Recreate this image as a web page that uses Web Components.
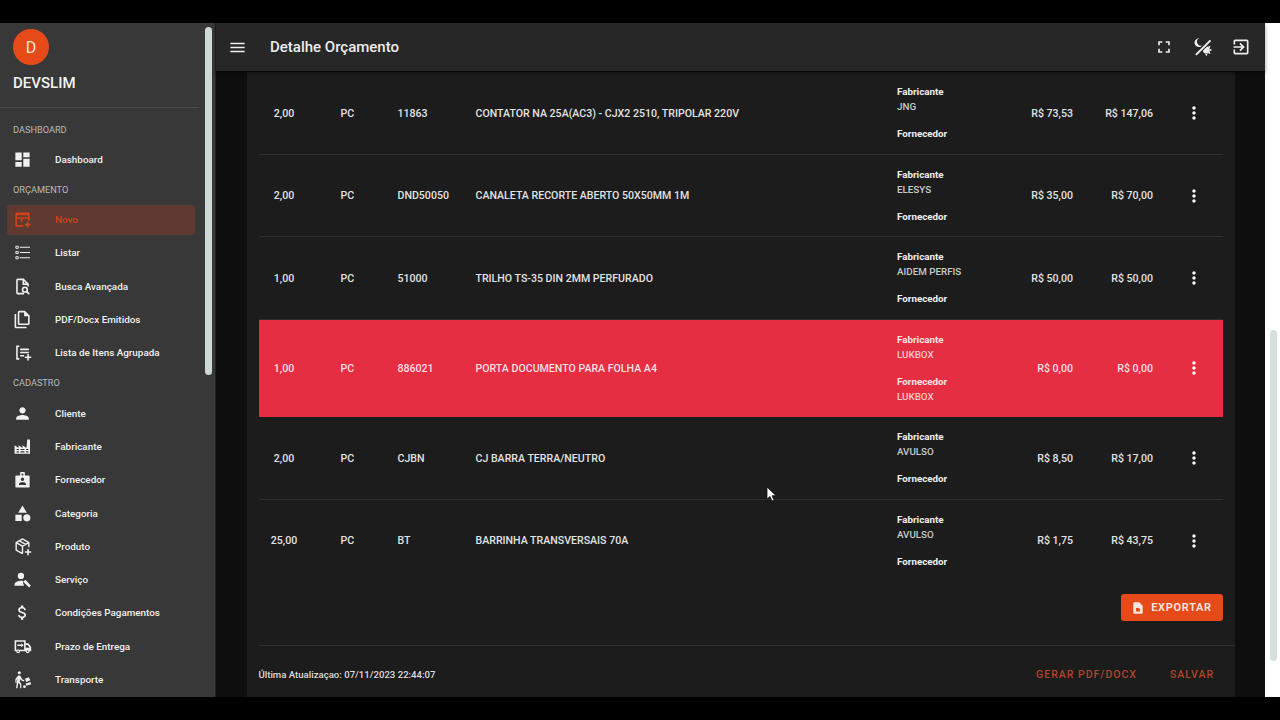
<!DOCTYPE html>
<html lang="pt-BR"><head><meta charset="utf-8"><title>Detalhe Orçamento</title>
<style>
html,body{margin:0;height:100%;background:#000;overflow:hidden;font-family:Roboto,"Liberation Sans",sans-serif}
</style></head><body>
<x-shell>
  <x-sidebar>
    <x-nav-label>DASHBOARD</x-nav-label>
    <x-nav-item icon="dashboard">Dashboard</x-nav-item>
    <x-nav-label>ORÇAMENTO</x-nav-label>
    <x-nav-item icon="calplus" active>Novo</x-nav-item>
    <x-nav-item icon="list">Listar</x-nav-item>
    <x-nav-item icon="find">Busca Avançada</x-nav-item>
    <x-nav-item icon="copy">PDF/Docx Emitidos</x-nav-item>
    <x-nav-item icon="playlist">Lista de Itens Agrupada</x-nav-item>
    <x-nav-label>CADASTRO</x-nav-label>
    <x-nav-item icon="person">Cliente</x-nav-item>
    <x-nav-item icon="factory">Fabricante</x-nav-item>
    <x-nav-item icon="badge">Fornecedor</x-nav-item>
    <x-nav-item icon="category">Categoria</x-nav-item>
    <x-nav-item icon="box">Produto</x-nav-item>
    <x-nav-item icon="service">Serviço</x-nav-item>
    <x-nav-item icon="money">Condições Pagamentos</x-nav-item>
    <x-nav-item icon="truck">Prazo de Entrega</x-nav-item>
    <x-nav-item icon="walker">Transporte</x-nav-item>
  </x-sidebar>
  <x-main>
    <x-card>
      <x-row qty="2,00" code="11863" desc="CONTATOR NA 25A(AC3) - CJX2 2510, TRIPOLAR 220V" fab="JNG" price="R$ 73,53" total="R$ 147,06"></x-row>
      <x-row qty="2,00" code="DND50050" desc="CANALETA RECORTE ABERTO 50X50MM 1M" fab="ELESYS" price="R$ 35,00" total="R$ 70,00"></x-row>
      <x-row qty="1,00" code="51000" desc="TRILHO TS-35 DIN 2MM PERFURADO" fab="AIDEM PERFIS" price="R$ 50,00" total="R$ 50,00"></x-row>
      <x-row alert qty="1,00" code="886021" desc="PORTA DOCUMENTO PARA FOLHA A4" fab="LUKBOX" forn="LUKBOX" price="R$ 0,00" total="R$ 0,00"></x-row>
      <x-row qty="2,00" code="CJBN" desc="CJ BARRA TERRA/NEUTRO" fab="AVULSO" price="R$ 8,50" total="R$ 17,00"></x-row>
      <x-row last qty="25,00" code="BT" desc="BARRINHA TRANSVERSAIS 70A" fab="AVULSO" price="R$ 1,75" total="R$ 43,75"></x-row>
      <x-card-actions></x-card-actions>
    </x-card>
  </x-main>
</x-shell>
<x-cursor></x-cursor>
<script>
const ICONS={
dashboard:'<path d="M3 13h8V3H3v10zm0 8h8v-6H3v6zm10 0h8V11h-8v10zm0-18v6h8V3h-8z"/>',
calplus:'<path fill-rule="evenodd" d="M4 3h16a1 1 0 0 1 1 1v10h-2v-3H5v8h8v2H4a1 1 0 0 1-1-1V4a1 1 0 0 1 1-1zm1 3.500V9h14V6.500z"/><path d="M10 11h2v4h-2zM17.500 15v2.500H15v2h2.500V22h2v-2.500H22v-2h-2.500V15z"/>',
list:'<path d="M8.500 4.700h13v1.400h-13zM8.500 11.300h13v1.400h-13zM8.500 17.900h13v1.400h-13z"/><path fill="none" stroke="currentColor" stroke-width="1.200" d="M3.600 4.100h3v2.600h-3zM3.600 10.700h3v2.600h-3zM3.600 17.300h3v2.600h-3z"/>',
find:'<path fill="none" stroke="currentColor" stroke-width="2" d="M14 3H6a1 1 0 0 0-1 1v16a1 1 0 0 0 1 1h8M13 3l6 6v3M13 3v6h6"/><circle cx="15" cy="16" r="3" fill="none" stroke="currentColor" stroke-width="2"/><path fill="none" stroke="currentColor" stroke-width="2.200" d="M17 18.200l3.500 3.500"/>',
copy:'<path d="M2 5h2v16h13v2H4a2 2 0 0 1-2-2z"/><path d="M15 1H8a2 2 0 0 0-2 2v14a2 2 0 0 0 2 2h11a2 2 0 0 0 2-2V7l-6-6zM8 17V3h6v5h5v9H8z"/>',
playlist:'<path d="M4 3h4v2H6v14h2v2H4zM9 7h11v2H9zM9 11h11v2H9zM9 15h5v2H9zM18 14v3h-3v2h3v3h2v-3h3v-2h-3v-3z"/>',
person:'<path d="M12 12c2.210 0 4-1.790 4-4s-1.790-4-4-4-4 1.790-4 4 1.790 4 4 4zm0 2c-2.670 0-8 1.340-8 4v2h16v-2c0-2.660-5.330-4-8-4z"/>',
factory:'<path fill-rule="evenodd" d="M2 21V10.500l5 3.500v-3.500l5 3.500v-3.500l5 3.500L18 3h3.500v18zM4.500 15v1.500h3V15zm5 0v1.500h5V15zm7 0v1.500h3V15zM4.500 18v1.500h3V18zm5 0v1.500h5V18zm7 0v1.500h3V18z"/>',
badge:'<path fill-rule="evenodd" d="M9 7V3.500a1 1 0 0 1 1-1h4a1 1 0 0 1 1 1V7h5a1 1 0 0 1 1 1v13a1 1 0 0 1-1 1H4a1 1 0 0 1-1-1V8a1 1 0 0 1 1-1zm2-2.500V7h2V4.500zM12 9.500a2.200 2.200 0 1 0 0 4.400 2.200 2.200 0 0 0 0-4.400zM7.500 19h9v-1.200c0-1.500-3-2.500-4.500-2.500s-4.500 1-4.500 2.500z"/>',
category:'<path d="M12 2l-5.500 9h11z"/><circle cx="17.500" cy="17.500" r="4.500"/><path d="M3 13.500h8v8H3z"/>',
box:'<g fill="none" stroke="currentColor" stroke-width="1.800" stroke-linejoin="round"><path d="M12 2.500l8 4.500v6M12 2.500L4 7v9.500l8 4.500M4 7l8 4.500L20 7M12 11.500V21M8 4.800l8 4.500"/></g><path d="M18 15v3h-3v2h3v3h2v-3h3v-2h-3v-3z"/>',
service:'<circle cx="10" cy="7.500" r="4"/><path d="M2 20v-2c0-3 5-4.500 8-4.500 1.200 0 2.500.2 3.700.6L12.500 16l1.500 4z"/><path d="M14 13.500l2-1 6.500 7-2 2.500-7-6.500z"/>',
money:'<path d="M11.800 10.900c-2.270-.59-3-1.200-3-2.150 0-1.090 1.010-1.850 2.700-1.850 1.780 0 2.440.85 2.500 2.100h2.210c-.07-1.720-1.120-3.300-3.210-3.810V3h-3v2.160c-1.940.42-3.500 1.680-3.500 3.610 0 2.310 1.910 3.460 4.700 4.130 2.500.6 3 1.480 3 2.410 0 .69-.49 1.790-2.700 1.790-2.060 0-2.870-.92-2.980-2.100h-2.200c.12 2.190 1.760 3.420 3.680 3.830V21h3v-2.150c1.950-.37 3.500-1.500 3.500-3.550 0-2.840-2.430-3.810-4.700-4.400z"/>',
truck:'<path fill-rule="evenodd" d="M2 4h14v4h3.500L23 12.500V18h-2a2.500 2.500 0 0 1-5 0H9a2.500 2.500 0 0 1-5 0H2zm2 2v10h1a2.500 2.500 0 0 1 3 0h6V6zm12 4v3.500h5l-2.500-3.500zM6.500 17a1 1 0 1 0 0 2 1 1 0 0 0 0-2zm12 0a1 1 0 1 0 0 2 1 1 0 0 0 0-2z"/><path d="M5.500 9.500h5V8l3 2.500-3 2.500v-1.500h-5z"/>',
walker:'<circle cx="8" cy="3.500" r="2"/><path d="M6.500 7H9l3 5 2.500 1-.7 1.500-3.300-1.200-1.300-2-.7 3.500 2 2.500V23H9v-4.500L6.800 16 5.500 23H3.800l1.700-11.500-1 1V16H3v-4.500z"/><path d="M15 11l5-2 1.800 4-5 2zM16 17l6-2 1 3-6 2z"/><circle cx="14.500" cy="21" r="1.800"/>',
menu:'<path d="M3 18h18v-2H3v2zm0-5h18v-2H3v2zm0-7v2h18V6H3z"/>',
full:'<path d="M7 14H5v5h5v-2H7v-3zm-2-4h2V7h3V5H5v5zm12 7h-3v2h5v-5h-2v3zM14 5v2h3v3h2V5h-5z"/>',
theme:'<path d="M7.500 1.500a5.300 5.300 0 1 0 4 8.300 4.600 4.600 0 0 1-4-8.300z"/><circle cx="16" cy="15.500" r="4.200"/><path d="M16 8l1.500 3h-3zM23 15.500l-3 1.500v-3zM16 23l-1.500-3h3zM21 10.500l-1 3-2-2zM21 20.500l-3-1 2-2z"/><path d="M3.500 21.500L21 4" stroke="#272727" stroke-width="4.600"/><path d="M3.500 21.500L21 4" stroke="currentColor" stroke-width="2.400"/>',
exit:'<path d="M10.090 15.590L11.500 17l5-5-5-5-1.410 1.410L12.670 11H3v2h9.670l-2.580 2.590zM19 3H5c-1.110 0-2 .9-2 2v4h2V5h14v14H5v-4H3v4c0 1.100.89 2 2 2h14c1.100 0 2-.9 2-2V5c0-1.100-.9-2-2-2z"/>',
more:'<path d="M12 8c1.100 0 2-.9 2-2s-.9-2-2-2-2 .9-2 2 .9 2 2 2zm0 2c-1.100 0-2 .9-2 2s.9 2 2 2 2-.9 2-2-.9-2-2-2zm0 6c-1.100 0-2 .9-2 2s.9 2 2 2 2-.9 2-2-.9-2-2-2z"/>',
file:'<path fill-rule="evenodd" d="M14 2H6c-1.100 0-2 .9-2 2v16c0 1.100.9 2 2 2h12c1.100 0 2-.9 2-2V8l-6-6zM8.500 12h5l2 2v4h-7z"/>'
};
function def(name,css,html){
  customElements.define(name,class extends HTMLElement{
    connectedCallback(){
      if(this.shadowRoot)return;
      const r=this.attachShadow({mode:'open'});
      r.innerHTML='<style>'+css+'</style>'+(typeof html==='function'?html(this):html);
    }
  });
}
def('x-icon',':host{display:inline-flex;width:var(--s,19px);height:var(--s,19px);flex:none}svg{width:100%;height:100%;fill:currentColor;display:block}',
  el=>'<svg viewBox="0 0 24 24" aria-hidden="true">'+(ICONS[el.getAttribute('name')]||'')+'</svg>');
def('x-shell',':host{display:flex;flex-direction:column;height:720px;box-sizing:border-box;padding:23px 0;position:relative}.wrap{flex:1;min-height:0;display:flex}.track{width:15px;flex:none;background:#fff;box-sizing:border-box;padding:307px 3px 0 4.500px}.thumb{height:331px;border-radius:4px;background:#d7dfdd}',
  '<div class="wrap"><slot></slot><div class="track"><div class="thumb"></div></div></div>');
def('x-sidebar',`:host{display:flex;flex-direction:column;width:216px;flex:none;background:#383838;overflow:hidden;position:relative;color:#eee;border-right:1px solid #222;box-sizing:border-box}
header{height:85px;flex:none;box-sizing:border-box;padding:6px 13px 0;margin-right:16px;border-bottom:1px solid #4a4a4a}
.av{width:36px;height:36px;border-radius:50%;background:#e64a19;color:#f4e4de;display:flex;align-items:center;justify-content:center;font-size:16px}
.nm{margin-top:10px;font-size:15px;font-weight:500;line-height:17px;color:#f2f2f2}
nav{padding-top:7.700px}
.sb{position:absolute;left:205px;top:4px;width:7px;height:348px;background:#cfd8d6;border-radius:4px}`,
  '<header><div class="av">D</div><div class="nm">DEVSLIM</div></header><nav><slot></slot></nav><div class="sb"></div>');
def('x-nav-label',':host{display:flex;align-items:center;height:27px;padding-left:13px;font-size:9.200px;color:#b9b9b9}','<slot></slot>');
def('x-nav-item',`:host{display:block;height:33.300px;box-sizing:border-box;padding:1.700px 20px 1.700px 7px;color:#f0f0f0;font-size:9.900px;font-weight:500}
.i{height:100%;display:flex;align-items:center;padding-left:5.500px;gap:23.500px;border-radius:3px}
:host([active]) .i{background:#5f3a31;color:#cf421a}`,
  el=>'<div class="i"><x-icon name="'+el.getAttribute('icon')+'"></x-icon><span><slot></slot></span></div>');
def('x-main',`:host{flex:1;min-width:0;display:flex;flex-direction:column;background:#0e0e0e;position:relative}
.bar{height:48px;flex:none;background:#272727;display:flex;align-items:center;color:#eee;box-shadow:0 2px 4px rgba(0,0,0,.4);position:relative;z-index:1;padding:0 14px 0 12px}
.t{font-size:15px;font-weight:500;margin-left:23px;flex:1;color:#ececec}
.ac{display:flex;align-items:center;gap:18.500px}
.body{flex:1;min-height:0;padding:1px 30px 0 31px}`,
  `<div class="bar"><x-icon name="menu" style="--s:19px"></x-icon><div class="t">Detalhe Orçamento</div><div class="ac"><x-icon name="full" style="--s:20px"></x-icon><x-icon name="theme" style="--s:20px"></x-icon><x-icon name="exit" style="--s:20px"></x-icon></div></div><div class="body"><slot></slot></div>`);
def('x-card',':host{display:block;height:100%;background:#1c1c1d;padding:0 0 0 11.500px;box-sizing:border-box}','<slot></slot>');
def('x-row',`:host{display:grid;grid-template-columns:51px 88px 78px 421.500px 103px 73px 80px 70px;align-items:center;height:82.500px;box-sizing:border-box;margin-right:12px;box-shadow:inset 0 -1px 0 #2e2e2e;color:#e2e2e2;font-size:10.600px;font-weight:500}
:host([last]){box-shadow:none}
:host([alert]){height:97.500px;background:#e62e42;box-shadow:none;color:#f8dfe2}
.q{text-align:center}.u{padding-left:31px}.r{text-align:right}
.f{line-height:15px;font-size:9.800px;padding-bottom:1px}.f b{display:block;font-weight:700;color:#eee}.f i{display:block;font-style:normal;min-height:0;color:#c9c9c9}.f b+i+b{margin-top:12px}
:host([alert]) .f b{color:#fbe3e5}:host([alert]) .f i{color:#fac4ca}
.k{padding-left:12px;display:flex;justify-content:center;color:#fff}`,
  el=>{const a=n=>el.getAttribute(n)||'';return `<div class="q">${a('qty')}</div><div class="u">PC</div><div>${a('code')}</div><div>${a('desc')}</div><div class="f"><b>Fabricante</b><i>${a('fab')}</i><b>Fornecedor</b>${a('forn')?'<i>'+a('forn')+'</i>':''}</div><div class="r">${a('price')}</div><div class="r">${a('total')}</div><div class="k"><x-icon name="more" style="--s:20px"></x-icon></div>`});
def('x-card-actions',`:host{display:block;font-size:9.600px}
.e{display:flex;justify-content:flex-end;padding:12px 12px 24px 0}
button{display:flex;align-items:center;gap:6px;height:27px;width:102px;justify-content:center;border:0;border-radius:3px;background:#e64a19;color:#f6e6e0;font:600 11px Roboto,sans-serif;letter-spacing:.7px;padding:0 1px 0 0}
.d{height:1px;background:#2e2e2e}
.g{display:flex;align-items:center;justify-content:space-between;height:56px;padding-right:21px;color:#ddd;font-weight:500}
.g .a{display:flex;gap:33px;color:#b0452a;font-size:10.500px;font-weight:500;letter-spacing:1px}`,
  `<div class="e"><button><x-icon name="file" style="--s:14px"></x-icon>EXPORTAR</button></div><div class="d"></div><div class="g"><span>Última Atualizaçao: 07/11/2023 22:44:07</span><span class="a"><span>GERAR PDF/DOCX</span><span>SALVAR</span></span></div>`);
def('x-cursor',':host{position:absolute;left:766px;top:486px;width:11px;height:16px;display:block}svg{display:block}',
  '<svg width="11" height="16" viewBox="0 0 11 16"><path d="M1 1v12l3-2.500 2 4.500 2-1-2-4.300h4z" fill="#fff" stroke="#111" stroke-width=".8"/></svg>');
</script>
</body></html>
